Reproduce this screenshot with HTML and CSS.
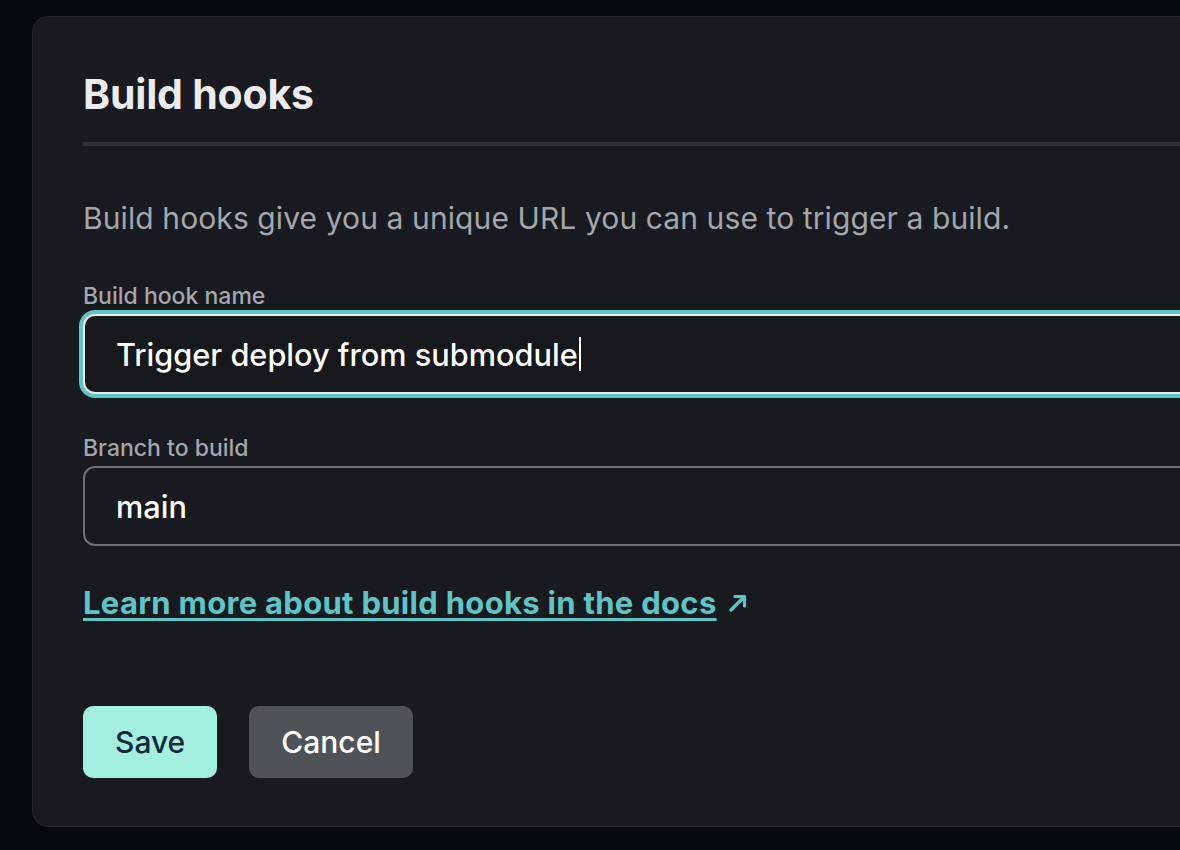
FILE: index.html
```html
<!DOCTYPE html>
<html>
<head>
<meta charset="utf-8">
<link rel="stylesheet" href="styles.css">
</head>
<body>
<div class="card">
  <h1 class="title">Build hooks</h1>
  <p class="desc">Build hooks give you a unique URL you can use to trigger a build.</p>
  <div class="field">
    <label class="label">Build hook name</label>
    <div class="input focused"><span class="value">Trigger deploy from submodule</span><span class="caret"></span></div>
  </div>
  <div class="field field-2">
    <label class="label">Branch to build</label>
    <div class="input"><span class="value">main</span></div>
  </div>
  <a class="link" href="#"><span class="link-text">Learn more about build hooks in the docs</span><svg class="arrow" width="20" height="20" viewBox="0 0 20 20"><path d="M3 17 L16.5 3.5 M7 3.5 H16.5 V13" fill="none" stroke="#5ec5c6" stroke-width="3.2" stroke-linecap="round" stroke-linejoin="round"/></svg></a>
  <div class="actions">
    <button class="btn btn-save">Save</button>
    <button class="btn btn-cancel">Cancel</button>
  </div>
</div>
</body>
</html>
```
FILE: styles.css
```css
html, body {
  margin: 0;
  padding: 0;
  background: #06090c;
  overflow: hidden;
  width: 1180px;
  height: 850px;
}
body {
  font-family: Inter, "Liberation Sans", sans-serif;
}
.card {
  margin: 16px 0 0 32px;
  width: 1220px;
  box-sizing: border-box;
  background: #181a1f;
  border: 1px solid #25282d;
  border-radius: 16px;
  padding: 53px 0 48px 50px;
}
.title {
  margin: 0;
  font-size: 41px;
  line-height: 48px;
  font-weight: 700;
  color: #ececee;
  padding-bottom: 24px;
  border-bottom: 4px solid #2d2f34;
  letter-spacing: -0.2px;
}
.desc {
  margin: 52px 0 0 0;
  font-size: 30px;
  line-height: 40px;
  color: #a3a6aa;
  letter-spacing: 0.1px;
}
.field {
  margin-top: 44px;
  display: flex;
  flex-direction: column;
  gap: 4px;
}
.field-2 {
  margin-top: 40px;
}
.label {
  font-size: 23px;
  line-height: 28px;
  font-weight: 500;
  color: #a3a6aa;
}
.input {
  height: 80px;
  box-sizing: border-box;
  border: 2px solid #6d7075;
  border-radius: 12px;
  padding-left: 31px;
  display: flex;
  align-items: center;
  background: #181a1f;
}
.input.focused {
  border-color: #e9eaea;
  box-shadow: 0 0 0 4px #5ec5c6;
  background: #16181c;
}
.value {
  font-size: 30.7px;
  font-weight: 500;
  color: #ffffff;
}
.caret {
  display: inline-block;
  width: 2px;
  height: 34px;
  background: #ffffff;
  margin-left: 1px;
}
.link {
  margin-top: 37px;
  display: inline-flex;
  align-items: center;
  gap: 11px;
  font-size: 31px;
  line-height: 40px;
  font-weight: 700;
  color: #5ec5c6;
  text-decoration: none;
  letter-spacing: 0.3px;
}
.link-text {
  text-decoration: underline;
  text-decoration-thickness: 3px;
  text-underline-offset: 4px;
}
.arrow {
  display: block;
}
.actions {
  margin-top: 83px;
  display: flex;
  gap: 32px;
}
.btn {
  height: 72px;
  border: none;
  border-radius: 10px;
  padding: 0 32px;
  font-family: Inter, "Liberation Sans", sans-serif;
  font-size: 30px;
  font-weight: 500;
}
.btn-save {
  background: #a3f0e0;
  color: #13293b;
}
.btn-cancel {
  background: #4f5257;
  color: #ffffff;
}
```
